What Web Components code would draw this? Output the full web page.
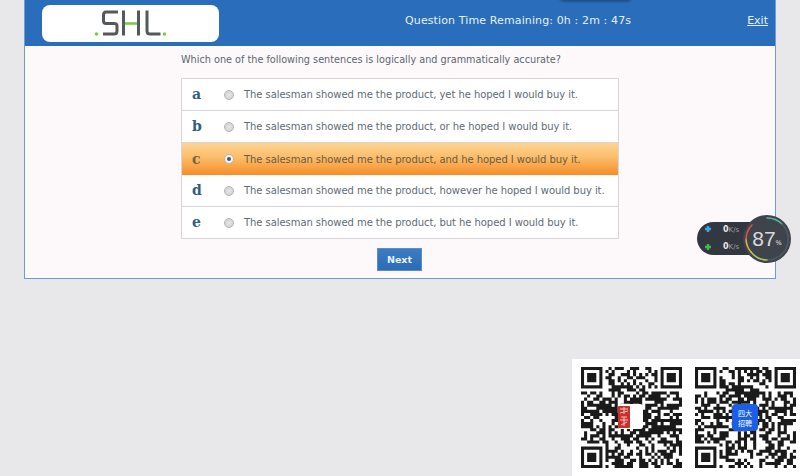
<!DOCTYPE html>
<html><head><meta charset="utf-8">
<style>
html,body{margin:0;padding:0;height:476px;overflow:hidden;background:#e8e8ea;font-family:"DejaVu Sans",sans-serif}
</style></head><body>
<test-page></test-page>
<template id="t-page"><style>
:host{display:block;position:relative;width:800px;height:476px;padding:0 24px;box-sizing:border-box}
.panel{width:752px;height:279px;box-sizing:border-box;border:1px solid #6f9bd6;border-top:0;background:#fdf9fb;display:flex;flex-direction:column}
.main{flex:1;display:flex;flex-direction:column;padding:0 0 0 156px}
.q{font-size:9.7px;color:#5b6670;line-height:14px;margin:7px 0 11px;white-space:nowrap}
.next{margin:9px 0 0 196px}
.notch{position:absolute;left:558px;top:-5px;width:75px;height:7px;border-radius:0 0 20px 20px;background:#1f4f86;filter:blur(1px)}
</style>
<div class="panel">
<test-header></test-header>
<div class="main">
<div class="q">Which one of the following sentences is logically and grammatically accurate?</div>
<option-list>
<option-row letter="a">The salesman showed me the product, yet he hoped I would buy it.</option-row>
<option-row letter="b">The salesman showed me the product, or he hoped I would buy it.</option-row>
<option-row letter="c" selected>The salesman showed me the product, and he hoped I would buy it.</option-row>
<option-row letter="d">The salesman showed me the product, however he hoped I would buy it.</option-row>
<option-row letter="e">The salesman showed me the product, but he hoped I would buy it.</option-row>
</option-list>
<next-button class="next">Next</next-button>
</div></div>
<div class="notch"></div>
<net-widget></net-widget>
<qr-panel></qr-panel>
</template>

<template id="t-header"><style>
:host{display:flex;align-items:center;height:46px;flex:none;background:#2a6ebb;color:#e6f0fa;box-sizing:border-box;padding:0 7px 0 17px}
.logo{width:177px;height:37px;margin-top:1px;background:#fff;border-radius:8px;display:flex;align-items:center;justify-content:center;flex:none}
.time{flex:1;text-align:center;font-size:11px;letter-spacing:.12px;margin:-6px 0 0 70px;white-space:nowrap}
a{font-size:11px;color:#e6f0fa;text-decoration:underline;margin:-6px 0 0 0}
</style>
<div class="logo"><svg width="76" height="34" viewBox="0 0 76 34" fill="none">
<circle cx="3.500" cy="27" r="1.800" fill="#7ec945"/><circle cx="71.500" cy="27" r="1.800" fill="#7ec945"/>
<path d="M25 5H13Q10.500 5 10.500 8V14Q10.500 16.500 13 16.500H21Q24 16.500 24 19V24Q24 27 21 27H10" stroke="#56595c" stroke-width="3"/>
<path d="M30.500 3.500V28.500M45.500 3.500V28.500" stroke="#56595c" stroke-width="3"/>
<path d="M32 16.500H44" stroke="#7ec945" stroke-width="2.600"/>
<path d="M54 3.500V24Q54 27 57 27H67.500" stroke="#56595c" stroke-width="3"/>
</svg></div>
<div class="time">Question Time Remaining: 0h : 2m : 47s</div>
<a href="#">Exit</a>
</template>

<template id="t-list"><style>
:host{display:block;width:438px;box-sizing:border-box;border:1px solid #d6d6d8;background:#fff}
</style><slot></slot></template>

<template id="t-row"><style>
:host{display:flex;align-items:center;height:32px;box-sizing:border-box;border-bottom:1px solid #d6d6d8;background:#fff;color:#5f6b75;font-size:10px;letter-spacing:-.06px;white-space:nowrap}
:host(:last-child){border-bottom:0;height:31px}
:host([selected]){background:linear-gradient(#fdd493 0,#fbbd6a 45%,#f88d28 100%);border-bottom:0;color:#6b5b45}
.l{width:42px;padding-left:10px;box-sizing:border-box;font:bold 14px "DejaVu Serif",serif;letter-spacing:0;color:#2f6080;flex:none;margin-top:-1px}
:host([selected]) .l{color:#7a6040}
.r{width:10px;height:10px;border-radius:50%;box-sizing:border-box;border:1px solid #b5b5b5;background:radial-gradient(#e6e6e6,#cfcfcf);margin-right:10px;flex:none;display:flex;align-items:center;justify-content:center}
:host([selected]) .r{background:#f3f3f3}
:host([selected]) .r::after{content:"";width:4px;height:4px;border-radius:50%;background:#555}
</style><span class="l"></span><span class="r"></span><span class="x"><slot></slot></span></template>

<template id="t-next"><style>
:host{display:flex;align-items:center;justify-content:center;width:45px;height:23px;box-sizing:border-box;background:linear-gradient(#3c7cc4,#2c6cb6);color:#e8f0fa;font-weight:bold;font-size:9.500px;border:1px solid #5b8fca}
</style><slot></slot></template>

<template id="t-net"><style>
:host{position:absolute;left:697px;top:215px;width:94px;height:48px;display:block;color:#dcdfe2}
.pill{position:absolute;left:0;top:7px;width:72px;height:33px;border-radius:17px;background:#33373f;font-size:7px}
.line{position:absolute;left:26px;display:flex;align-items:baseline;white-space:nowrap}
.line b{font-size:8px;color:#e8e8e8;font-weight:bold}
.line span{color:#9a9ea4;font-size:7px}
.ic{position:absolute;left:8px;width:6px;height:6px}
.dial{position:absolute;left:46px;top:0;width:48px;height:48px;border-radius:50%;background:#3f434c;display:flex;align-items:center;justify-content:center;color:#e8e9ea}
.dial svg{position:absolute;left:0;top:0}
.n{font-size:21px;font-family:"Liberation Sans",sans-serif;font-weight:400;color:#d8dadc}
.p{font-size:6.500px;margin:7px 0 0 0}
</style>
<div class="pill">
<svg class="ic" style="top:4px" viewBox="0 0 6 6"><path d="M3 0V6M0 3H6" stroke="#3aa6e8" stroke-width="2.400"/></svg>
<div class="line" style="top:3px"><b>0</b><span>K/s</span></div>
<svg class="ic" style="top:22px" viewBox="0 0 6 6"><path d="M3 0V6M0 3H6" stroke="#3fbb4d" stroke-width="2.400"/></svg>
<div class="line" style="top:20px"><b>0</b><span>K/s</span></div>
</div>
<div class="dial">
<svg width="48" height="48" viewBox="0 0 48 48" fill="none" stroke-width="1.600" stroke-linecap="round">
<path d="M24 3A21 21 0 0 1 39 9" stroke="#4fbfa0"/>
<path d="M39 9A21 21 0 0 1 24 45" stroke="#4a5a64"/>
<path d="M24 45A21 21 0 0 1 8 37" stroke="#a8c45a"/>
<path d="M8 37A21 21 0 0 1 3 24" stroke="#d9b43c"/>
<path d="M3 24A21 21 0 0 1 9 10" stroke="#d8573c"/>
</svg>
<span class="n">87</span><span class="p">%</span>
</div></template>

<template id="t-qrp"><style>
:host{position:absolute;left:572px;top:359px;width:228px;height:117px;background:#fff;display:block}
qr-code{position:absolute;top:8px}
.a{position:absolute;display:flex;align-items:center;justify-content:center}
.seal{left:46px;top:45px;width:25px;height:25px;background:#fff;border-radius:3px}
.seal svg{display:block;margin-left:-13px}
.blue{left:160px;top:45px;width:26px;height:27px;background:#1a5fe6;border-radius:4px;color:#fff;font:7px/10px "Noto Sans CJK SC",sans-serif;text-align:center;box-sizing:border-box;flex-direction:column}
</style>
<qr-code seed="7" style="left:9px"></qr-code>
<qr-code seed="23" style="left:123px"></qr-code>
<div class="a seal"><svg width="12" height="22" viewBox="0 0 12 22"><rect width="12" height="22" rx="1" fill="#c9302c"/><path d="M2 3H10M6 1V8M2 7L10 5M3 11H9M2 14H10M6 11V20M3 19L9 16" stroke="#f3c4c0" stroke-width="1" fill="none"/></svg></div>
<div class="a blue"><span>四大</span><span>招聘</span></div>
</template>

<script>
function tpl(id){return document.getElementById(id).content.cloneNode(true)}
function reg(name,id,extra){customElements.define(name,class extends HTMLElement{
 constructor(){super();this.attachShadow({mode:"open"}).appendChild(tpl(id))}
 connectedCallback(){extra&&extra(this)}
})}
reg("test-page","t-page");
reg("test-header","t-header");
reg("option-list","t-list");
reg("option-row","t-row",e=>{e.shadowRoot.querySelector(".l").textContent=e.getAttribute("letter")});
reg("next-button","t-next");
reg("net-widget","t-net");
reg("qr-panel","t-qrp");
customElements.define("qr-code",class extends HTMLElement{
 constructor(){super();this.attachShadow({mode:"open"})}
 connectedCallback(){
  const N=33;let s=+this.getAttribute("seed")*2654435761>>>0;
  const rnd=()=>{s^=s<<13;s>>>=0;s^=s>>>17;s^=s<<5;s>>>=0;return s/4294967296};
  const g=[];for(let y=0;y<N;y++){g[y]=[];for(let x=0;x<N;x++)g[y][x]=rnd()<.55}
  const finder=(ox,oy)=>{for(let y=-1;y<8;y++)for(let x=-1;x<8;x++){const X=ox+x,Y=oy+y;if(X<0||Y<0||X>=N||Y>=N)continue;
   const edge=(x==0||x==6)&&y>=0&&y<=6||(y==0||y==6)&&x>=0&&x<=6,core=x>=2&&x<=4&&y>=2&&y<=4;g[Y][X]=edge||core}};
  finder(0,0);finder(N-7,0);finder(0,N-7);
  let d="";for(let y=0;y<N;y++)for(let x=0;x<N;x++)if(g[y][x])d+=`M${x} ${y}h1v1h-1z`;
  this.shadowRoot.innerHTML=`<style>:host{display:block;width:101px;height:101px}svg{display:block;filter:blur(.35px)}</style><svg width="101" height="101" viewBox="0 0 33 33"><path fill="#1a1a1a" d="${d}"/></svg>`;
 }
});
</script>
</body></html>
